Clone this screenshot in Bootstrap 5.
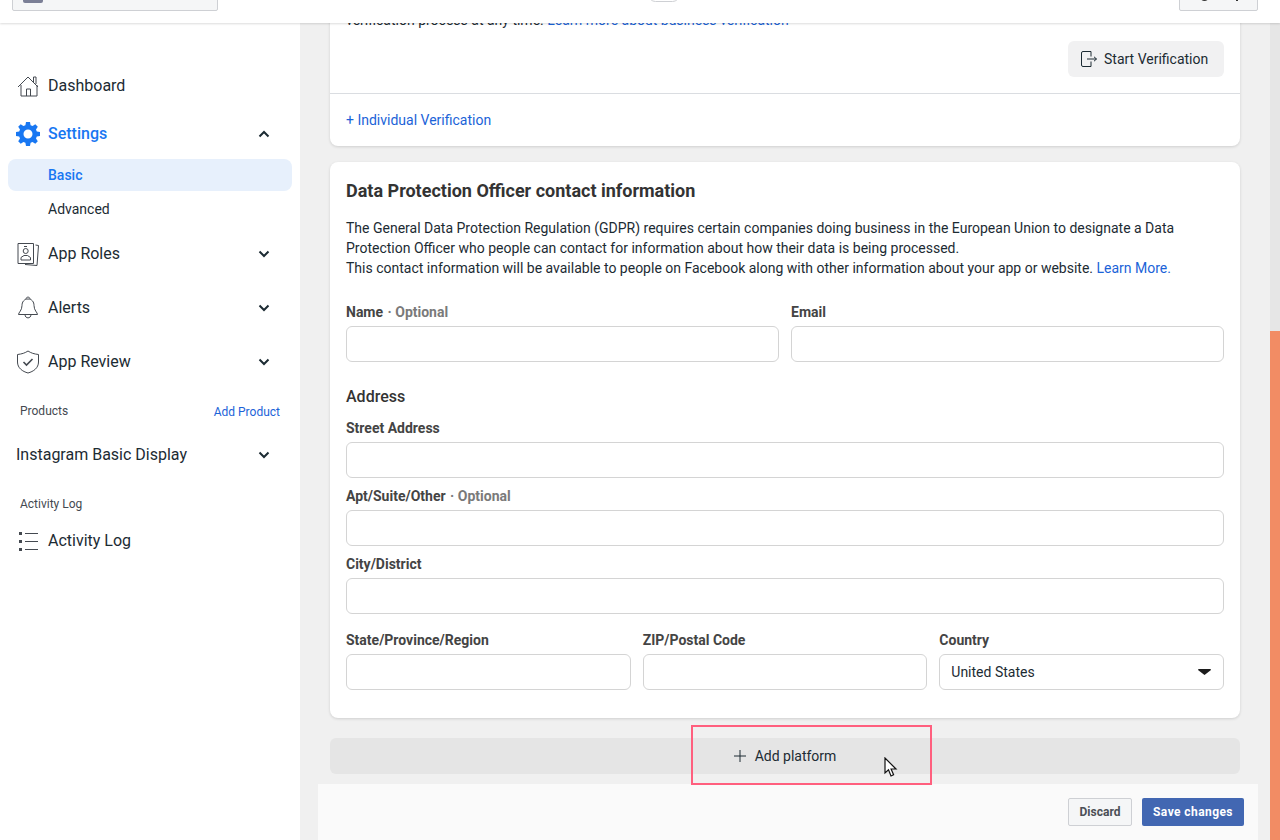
<!DOCTYPE html>
<html lang="en">
<head>
  <meta charset="UTF-8" />
  <meta name="viewport" content="width=device-width, initial-scale=1.0" />
  <title>Basic Settings</title>
  <link href="https://cdn.jsdelivr.net/npm/bootstrap@5.3.0/dist/css/bootstrap.min.css" rel="stylesheet" />
  <style>
    html, body { height: 100%; overflow: hidden; }
    body { font-family: Roboto, "Liberation Sans", sans-serif; font-size: 14px; color: #1c2b33; background: #f0f0f0; }
    a { color: #1b63d8; text-decoration: none; }
    .shell { height: 840px; position: relative; overflow: hidden; }

    /* top bar sits over the scrolled content */
    .topbar { position: absolute; inset: 0 0 auto 0; height: 23px; background: #fff; box-shadow: 0 1px 2px rgba(0,0,0,.14); z-index: 5; }
    .app-pick { position: absolute; left: 12px; top: -12px; width: 206px; height: 23px; background: #f5f6f7; border: 1px solid #ced0d4; border-radius: 2px; }
    .app-pick i { position: absolute; left: 10px; top: 3px; width: 20px; height: 11px; background: #7b7f96; border-radius: 2px; }
    .mid-pill { position: absolute; left: 648px; top: -13px; width: 32px; height: 15px; background: #fff; border: 1px solid #ced0d4; border-radius: 8px; }
    .help-pick { position: absolute; left: 1179px; top: -12px; width: 79px; height: 23px; background: #f5f6f7; border: 1px solid #ced0d4; border-radius: 2px; overflow: hidden; }
    .help-pick i { position: absolute; left: 19px; top: -1px; width: 11px; height: 13px; border: 1.5px solid #333; border-radius: 50%; }
    .help-pick b { position: absolute; left: 56px; top: 8px; width: 2px; height: 4px; background: #333; }

    .side { width: 300px; flex: none; background: #fff; padding-top: 62px; height: 840px; }
    .side-row { display: flex; align-items: center; height: 48px; padding: 0 16px; font-size: 16px; color: #1c2b33; }
    .side-row .ico { width: 24px; height: 24px; margin-right: 8px; flex: none; }
    .side-row .chev { margin-left: auto; margin-right: 14px; }
    .side-row.on { color: #1877f2; font-weight: 500; }
    .side-sub { margin: 2px 8px 0; height: 32px; padding-left: 40px; display: flex; align-items: center; font-size: 14px; border-radius: 8px; color: #1c2b33; }
    .side-sub.on { margin-top: 1px; background: #e7f0fc; color: #1877f2; font-weight: 500; }
    .side-head { display: flex; justify-content: space-between; padding: 0 20px; font-size: 12px; color: #444950; }
    .side-head a { color: #1b63d8; position: relative; top: 1px; }
    .gap-roles { margin-top: 5px; }
    .gap-item { margin-top: 6px; }
    .gap-products { margin-top: 16px; }
    .gap-insta { margin-top: 11px; }
    .gap-log { margin-top: 16px; }
    .gap-logrow { margin-top: 4px; }

    .main { flex: 1; position: relative; padding: 0 40px 0 30px; height: 840px; overflow: hidden; }
    .fb-card { background: #fff; border-radius: 8px; box-shadow: 0 1px 3px rgba(0,0,0,.14); }
    .verify { height: 146px; border-radius: 0 0 8px 8px; display: flex; flex-direction: column; }
    .verify-top { height: 94px; padding: 11px 16px 0; border-bottom: 1px solid #dadde1; line-height: 18px; display: flex; flex-direction: column; }
    .start-btn { align-self: flex-end; margin-top: 12px; height: 36px; width: 156px; background: #f1f1f2; border-radius: 6px; display: flex; align-items: center; padding-left: 12px; gap: 6px; color: #1c2b33; }
    .verify-foot { padding: 16px 16px 0; }

    .dpo { margin-top: 16px; height: 556px; padding: 18px 16px 0; }
    .dpo h2 { font-size: 18px; font-weight: 700; margin: 0 0 16px; line-height: 22px; color: #333; }
    .dpo p { margin: 0 0 26px; line-height: 20px; }
    .fld-label { font-size: 14px; font-weight: 700; display: block; line-height: 16px; margin-bottom: 6px; color: #444; }
    .fld-label span { color: #7a7a7a; margin-left: 1px; }
    .fld { height: 36px; border: 1px solid #d4d4d4; border-radius: 6px; background: #fff; width: 100%; display: block; }
    .fld-sel { display: flex; align-items: center; justify-content: space-between; padding: 0 12px 0 11px; }
    .addr-title { font-size: 16px; font-weight: 500; line-height: 20px; margin: 25px 0 13px; color: #333; }
    .stack { margin-bottom: 10px; }
    .addr-row { margin-top: 18px; --bs-gutter-x: 12px; }
    .name-row { --bs-gutter-x: 12px; }

    .add-plat { margin-top: 20px; height: 36px; background: #e5e5e5; border-radius: 6px; display: flex; align-items: center; justify-content: center; gap: 9px; }
    .hl-box { position: absolute; left: 691px; top: 725px; width: 241px; height: 60px; border: 2px solid #ff5f7e; z-index: 3; }
    .pointer { position: absolute; left: 884px; top: 757px; z-index: 4; }

    .savebar { position: absolute; left: 318px; top: 784px; width: 940px; height: 56px; background: #fafafa; display: flex; justify-content: flex-end; align-items: flex-start; padding: 14px 14px 0 0; gap: 10px; z-index: 2; }
    .bar-btn { height: 28px; font-size: 12px; font-weight: 700; border-radius: 2px; display: flex; align-items: center; justify-content: center; }
    .bar-discard { width: 64px; background: #f5f6f7; border: 1px solid #ced0d4; color: #4b4f56; }
    .bar-save { width: 102px; background: #4267b2; color: #fff; letter-spacing: .42px; }

    .scroll-track { position: absolute; left: 1270px; top: 23px; width: 10px; bottom: 0; background: #e6e6e6; z-index: 1; }
    .scroll-thumb { position: absolute; left: 0; right: 0; top: 308px; bottom: 0; background: #f28c64; }
  </style>
</head>
<body>
  <div class="shell d-flex">
    <div class="topbar">
      <div class="app-pick"><i></i></div>
      <div class="mid-pill"></div>
      <div class="help-pick"><i></i><b></b></div>
    </div>

    <!-- sidebar -->
    <nav class="side">
      <div class="side-row">
        <svg class="ico" viewBox="0 0 24 24" fill="none" stroke="#444950" stroke-width="1"><path d="M2 13 12 3l10 10M5 11v11h16V11M10.500 22v-7h4v7M17.500 8V3h2.500v7"/></svg>
        Dashboard
      </div>
      <div class="side-row on">
        <svg class="ico" viewBox="0 0 24 24" fill="#1877f2"><path fill-rule="evenodd" d="M10 0h4l.6 3.200 2 .8L19.300 2.200l2.500 2.500L20 7.400l.8 2L24 10v4l-3.200.6-.8 2 1.800 2.700-2.500 2.500-2.700-1.800-2 .8L14 24h-4l-.6-3.200-2-.8-2.700 1.800-2.500-2.500L4 16.600l-.8-2L0 14v-4l3.200-.6.800-2L2.200 4.700l2.500-2.500L7.400 4l2-.8zM12 7.500a4.500 4.500 0 1 0 0 9 4.500 4.500 0 0 0 0-9z"/></svg>
        Settings
        <svg class="chev" width="12" height="8" viewBox="0 0 12 8" fill="none" stroke="#1c2b33" stroke-width="2"><path d="M1.500 6.500 6 2l4.500 4.500"/></svg>
      </div>
      <div class="side-sub on">Basic</div>
      <div class="side-sub">Advanced</div>
      <div class="side-row gap-roles">
        <svg class="ico" viewBox="0 0 24 24" fill="none" stroke="#444950" stroke-width="1"><path d="M2 1.500h15.500v20H2zM19.500 3l3 .5-1.500 20-12-1"/><circle cx="9.700" cy="9" r="2.500"/><path d="M5 18v-2.500l3-2h3.500l3 2V18zM8 4.500h3"/></svg>
        App Roles
        <svg class="chev" width="12" height="8" viewBox="0 0 12 8" fill="none" stroke="#1c2b33" stroke-width="2"><path d="M1.500 1.500 6 6l4.500-4.500"/></svg>
      </div>
      <div class="side-row gap-item">
        <svg class="ico" viewBox="0 0 24 24" fill="none" stroke="#444950" stroke-width="1"><path d="M12 3c-4 0-6 3-6 6.500 0 5-3.500 7-3.500 9h19c0-2-3.500-4-3.500-9C18 6 16 3 12 3zM10 3c0-2.500 4-2.500 4 0M9 18.500c0 4.500 6 4.500 6 0"/></svg>
        Alerts
        <svg class="chev" width="12" height="8" viewBox="0 0 12 8" fill="none" stroke="#1c2b33" stroke-width="2"><path d="M1.500 1.500 6 6l4.500-4.500"/></svg>
      </div>
      <div class="side-row gap-item">
        <svg class="ico" viewBox="0 0 24 24" fill="none" stroke="#444950" stroke-width="1"><path d="M12 1c3 2 6 3 10.500 3.500V12c0 6-5 9.500-10.500 11C6.500 21.500 1.500 18 1.500 12V4.500C6 4 9 3 12 1z"/><path d="m7.500 12 3 3 6-6" stroke-width="1.600"/></svg>
        App Review
        <svg class="chev" width="12" height="8" viewBox="0 0 12 8" fill="none" stroke="#1c2b33" stroke-width="2"><path d="M1.500 1.500 6 6l4.500-4.500"/></svg>
      </div>
      <div class="side-head gap-products"><span>Products</span><a href="#">Add Product</a></div>
      <div class="side-row gap-insta">
        Instagram Basic Display
        <svg class="chev" width="12" height="8" viewBox="0 0 12 8" fill="none" stroke="#1c2b33" stroke-width="2"><path d="M1.500 1.500 6 6l4.500-4.500"/></svg>
      </div>
      <div class="side-head gap-log"><span>Activity Log</span></div>
      <div class="side-row gap-logrow">
        <svg class="ico" viewBox="0 0 24 24" fill="#444950"><rect x="3" y="3" width="3" height="3"/><rect x="3" y="11" width="3" height="3"/><rect x="3" y="19" width="3" height="3"/><path d="M9 4h13v1H9zM9 12h13v1H9zM9 20h13v1H9z"/></svg>
        Activity Log
      </div>
    </nav>

    <!-- main column -->
    <main class="main">
      <div class="fb-card verify">
        <div class="verify-top">
          <div>verification process at any time. <a href="#">Learn more about business verification</a></div>
          <div class="start-btn">
            <svg width="18" height="18" viewBox="0 0 18 18" fill="none" stroke="#1c2b33" stroke-width="1"><path d="M11 1.500H3a1.500 1.500 0 0 0-1.500 1.500v12A1.500 1.500 0 0 0 3 16.500h8v-5M11 1.500v5M7 9h9.500M14 6.800 16.500 9 14 11.200"/></svg>
            <span>Start Verification</span>
          </div>
        </div>
        <div class="verify-foot"><a href="#">+ Individual Verification</a></div>
      </div>

      <div class="fb-card dpo">
        <h2>Data Protection Officer contact information</h2>
        <p>The General Data Protection Regulation (GDPR) requires certain companies doing business in the European Union to designate a Data Protection Officer who people can contact for information about how their data is being processed.<br>This contact information will be available to people on Facebook along with other information about your app or website. <a href="#">Learn More.</a></p>

        <div class="row name-row">
          <div class="col-6">
            <label class="fld-label">Name <span>· Optional</span></label>
            <input class="fld" type="text">
          </div>
          <div class="col-6">
            <label class="fld-label">Email</label>
            <input class="fld" type="text">
          </div>
        </div>

        <div class="addr-title">Address</div>
        <div class="stack">
          <label class="fld-label">Street Address</label>
          <input class="fld" type="text">
        </div>
        <div class="stack">
          <label class="fld-label">Apt/Suite/Other <span>· Optional</span></label>
          <input class="fld" type="text">
        </div>
        <div class="stack">
          <label class="fld-label">City/District</label>
          <input class="fld" type="text">
        </div>
        <div class="row addr-row">
          <div class="col-4">
            <label class="fld-label">State/Province/Region</label>
            <input class="fld" type="text">
          </div>
          <div class="col-4">
            <label class="fld-label">ZIP/Postal Code</label>
            <input class="fld" type="text">
          </div>
          <div class="col-4">
            <label class="fld-label">Country</label>
            <div class="fld fld-sel">
              <span>United States</span>
              <svg width="13" height="6" viewBox="0 0 13 6" fill="#1c1c1c"><path d="M0 1a1 1 0 0 1 1-1h11a1 1 0 0 1 1 1L6.500 6z"/></svg>
            </div>
          </div>
        </div>
      </div>

      <div class="add-plat">
        <svg width="12" height="12" viewBox="0 0 12 12" stroke="#1c2b33" stroke-width="1"><path d="M6 0v12M0 6h12"/></svg>
        <span>Add platform</span>
      </div>
    </main>

    <div class="hl-box"></div>
    <svg class="pointer" width="14" height="21" viewBox="0 0 14 21"><path d="M1 1v15l3.500-3.200L7 19l2.600-1.200-2.500-5.800H12z" fill="#fff" stroke="#111" stroke-width="1.200"/></svg>

    <div class="savebar">
      <div class="bar-btn bar-discard">Discard</div>
      <div class="bar-btn bar-save">Save changes</div>
    </div>

    <div class="scroll-track"><div class="scroll-thumb"></div></div>
  </div>
  <script src="https://cdn.jsdelivr.net/npm/bootstrap@5.3.0/dist/js/bootstrap.bundle.min.js"></script>
</body>
</html>
